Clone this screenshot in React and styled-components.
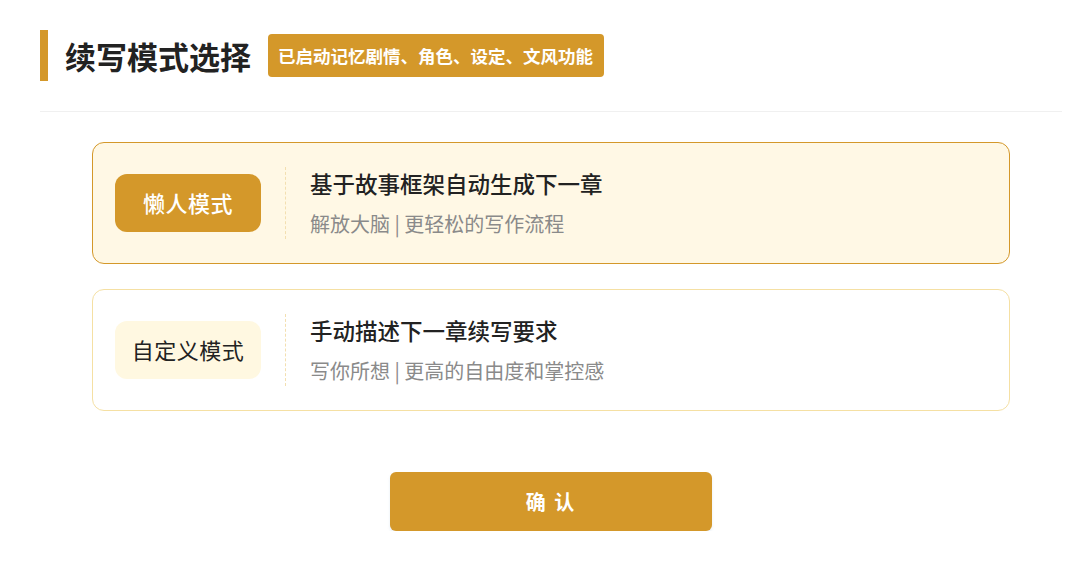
import React, { useState } from "react";
import styled, { createGlobalStyle } from "styled-components";

const Global = createGlobalStyle`
  html, body { margin: 0; padding: 0; background: #ffffff; }
  body { font-family: "Noto Sans CJK SC", "Noto Sans", sans-serif; }
  * { box-sizing: border-box; }
`;

const Page = styled.div`
  width: 1022px;
  margin-left: 40px;
  padding-top: 30px;
`;

const Header = styled.div`
  display: flex;
  align-items: center;
  height: 51px;
  border-left: 8px solid #d4982a;
  padding-left: 17px;
  gap: 17px;
`;

const Title = styled.h1`
  margin: 0;
  font-size: 31px;
  font-weight: 700;
  color: #222222;
  line-height: 1;
`;

const Badge = styled.span`
  display: inline-flex;
  align-items: center;
  height: 43px;
  padding: 0 11px 0 10px;
  background: #d4982a;
  color: #ffffff;
  font-size: 17.5px;
  font-weight: 700;
  border-radius: 4px;
  white-space: nowrap;
`;

const Divider = styled.div`
  height: 1px;
  background: #f0f0f0;
  margin-top: 30px;
`;

const List = styled.div`
  display: flex;
  flex-direction: column;
  gap: 25px;
  padding: 30px 52px 0;
`;

const Card = styled.div`
  display: flex;
  align-items: center;
  height: 122px;
  padding-left: 22px;
  border-radius: 12px;
  border: 1px solid ${(p) => (p.$active ? "#d4982a" : "#f5e0a3")};
  background: ${(p) => (p.$active ? "#fff8e5" : "#ffffff")};
  cursor: pointer;
`;

const ModeTag = styled.div`
  width: 146px;
  height: 58px;
  display: flex;
  align-items: center;
  justify-content: center;
  padding-bottom: 3px;
  border-radius: 12px;
  font-size: 22px;
  letter-spacing: 0.5px;
  font-weight: ${(p) => (p.$active ? 500 : 400)};
  background: ${(p) => (p.$active ? "#d4982a" : "#fff8e1")};
  color: ${(p) => (p.$active ? "#ffffff" : "#222222")};
`;

const VLine = styled.div`
  width: 0;
  height: 72px;
  border-left: 1px dashed #f3dfb0;
  margin: 0 24px;
`;

const Texts = styled.div`
  display: flex;
  flex-direction: column;
  gap: 14px;
  padding-bottom: 1px;
`;

const CardTitle = styled.div`
  font-size: 22.5px;
  font-weight: 500;
  color: #222222;
  line-height: 28px;
`;

const CardSub = styled.div`
  font-size: 20px;
  color: #8a8a8a;
  line-height: 26px;
`;

const Footer = styled.div`
  display: flex;
  justify-content: center;
  padding-top: 61px;
`;

const Confirm = styled.button`
  width: 322px;
  height: 59px;
  border: none;
  border-radius: 6px;
  background: #d4982a;
  color: #ffffff;
  font-family: "Noto Sans CJK SC", sans-serif;
  font-size: 20px;
  font-weight: 700;
  letter-spacing: 2px;
  box-shadow: 0 2px 3px rgba(120, 160, 200, 0.18);
  cursor: pointer;
`;

const modes = [
  { key: "lazy", tag: "懒人模式", title: "基于故事框架自动生成下一章", sub: "解放大脑 | 更轻松的写作流程" },
  { key: "custom", tag: "自定义模式", title: "手动描述下一章续写要求", sub: "写你所想 | 更高的自由度和掌控感" },
];

export default function App() {
  const [sel, setSel] = useState("lazy");
  return (
    <>
      <Global />
      <Page>
        <Header>
          <Title>续写模式选择</Title>
          <Badge>已启动记忆剧情、角色、设定、文风功能</Badge>
        </Header>
        <Divider />
        <List>
          {modes.map((m) => (
            <Card key={m.key} $active={sel === m.key} onClick={() => setSel(m.key)}>
              <ModeTag $active={sel === m.key}>{m.tag}</ModeTag>
              <VLine />
              <Texts>
                <CardTitle>{m.title}</CardTitle>
                <CardSub>{m.sub}</CardSub>
              </Texts>
            </Card>
          ))}
        </List>
        <Footer>
          <Confirm>确 认</Confirm>
        </Footer>
      </Page>
    </>
  );
}
